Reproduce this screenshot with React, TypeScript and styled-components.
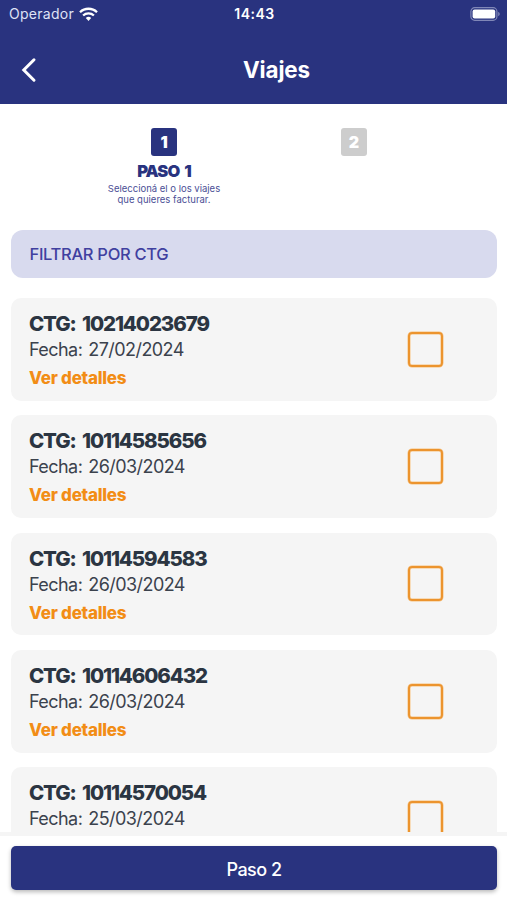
import React from 'react';
import styled, { createGlobalStyle } from 'styled-components';

const NAVY = '#29337f';
const ORANGE = '#f28d16';

const GlobalStyle = createGlobalStyle`
  * { box-sizing: border-box; }
  body { margin: 0; background: #fff; font-family: Inter, sans-serif; }
  button { font-family: inherit; }
`;

const Screen = styled.div`
  width: 507px;
  height: 900px;
  display: flex;
  flex-direction: column;
  overflow: hidden;
  background: #fff;
`;

const Header = styled.header`
  flex: none;
  height: 103.5px;
  background: ${NAVY};
  color: #fff;
`;

const StatusBar = styled.div`
  height: 28px;
  padding: 0 7px 0 9px;
  display: grid;
  grid-template-columns: 1fr auto 1fr;
  align-items: center;
`;

const Carrier = styled.div`
  display: flex;
  align-items: center;
  gap: 5px;
  font-size: 14px;
  letter-spacing: 0.28px;
  line-height: 28px;
  color: #dfe2f5;
`;

const Clock = styled.div`
  font-size: 14px;
  font-weight: 600;
  letter-spacing: 0.5px;
  line-height: 28px;
`;

const BatterySlot = styled.div`
  display: flex;
  justify-content: flex-end;
  padding-bottom: 1px;
`;

const NavBar = styled.div`
  height: 75px;
  padding: 5px 0 0 20px;
  display: grid;
  grid-template-columns: 40px 1fr;
  align-items: start;
`;

const BackButton = styled.button`
  width: 18px;
  height: 74px;
  padding: 0;
  border: 0;
  background: none;
  display: flex;
  align-items: center;
`;

const Title = styled.h1`
  margin: 0;
  padding-right: 14px;
  text-align: center;
  font-size: 22.4px;
  font-weight: 700;
  line-height: 74px;
  letter-spacing: -0.1px;
`;

const Steps = styled.div`
  flex: none;
  height: 126px;
  padding: 24px 58px 0 69px;
  display: grid;
  grid-template-columns: 1fr 1fr;
`;

const Step = styled.div`
  display: flex;
  flex-direction: column;
  align-items: center;
`;

const StepNumber = styled.div<{ $active?: boolean }>`
  width: 26px;
  height: 28px;
  border-radius: 3px;
  background: ${(p) => (p.$active ? NAVY : '#cdcdcd')};
  color: #fff;
  font-size: 16px;
  font-weight: 900;
  line-height: 29px;
  text-align: center;
`;

const StepTitle = styled.div`
  margin-top: 5px;
  color: ${NAVY};
  font-size: 16.5px;
  font-weight: 900;
  line-height: 20px;
  letter-spacing: -0.9px;
  word-spacing: 2.5px;
`;

const StepText = styled.div`
  margin-top: 2px;
  color: #4b4f96;
  font-size: 9.5px;
  line-height: 11px;
  letter-spacing: 0;
  text-align: center;
  white-space: nowrap;
`;

const Filter = styled.div`
  flex: none;
  height: 48.5px;
  margin: 0 10px 20px 11px;
  padding-left: 18.5px;
  border-radius: 12px;
  background: #d8daee;
  color: #4040a0;
  font-size: 16.5px;
  font-weight: 500;
  line-height: 48px;
  letter-spacing: -0.3px;
`;

const List = styled.main`
  flex: 1;
  min-height: 0;
  padding: 0 10px 0 11px;
  overflow: hidden;
`;

const Card = styled.article`
  height: 102.8px;
  margin-bottom: 14.5px;
  padding: 0 54px 0 18px;
  display: flex;
  align-items: center;
  justify-content: space-between;
  border-radius: 10px;
  background: #f5f5f5;
`;

const CardText = styled.div`
  height: 103px;
  padding-top: 13px;
  color: #2b3542;
  white-space: nowrap;
`;

const TripCode = styled.div`
  font-size: 20.5px;
  font-weight: 800;
  line-height: 26px;
  letter-spacing: -1.12px;
  word-spacing: 3px;
`;

const TripDate = styled.div`
  color: #3b424d;
  font-size: 18px;
  line-height: 25px;
  letter-spacing: -0.56px;
  word-spacing: 1.5px;
`;

const DetailsLink = styled.div`
  margin-top: 3px;
  color: ${ORANGE};
  font-size: 17px;
  font-weight: 800;
  line-height: 26px;
  letter-spacing: -0.25px;
`;

const Checkbox = styled.div`
  width: 35px;
  height: 35px;
  border: 2px solid #ec942e;
  border-radius: 4px;
  box-shadow: 0 0 0 0.5px #f8c27f, inset 0 0 0 0.5px #f8c27f;
`;

const Footer = styled.footer`
  flex: none;
  height: 68px;
  padding: 9.5px 10px 0 11px;
  border-top: 4px solid #f5f5f5;
  background: #fff;
`;

const NextButton = styled.button`
  display: block;
  width: 100%;
  height: 44.5px;
  padding: 0;
  border: 0;
  border-radius: 5px;
  background: ${NAVY};
  box-shadow: 0 2px 4px rgba(0, 0, 0, 0.28);
  color: #fff;
  font-size: 18px;
  font-weight: 500;
  line-height: 47px;
  letter-spacing: -0.5px;
`;

type Trip = { code: string; date: string; details: boolean };

const trips: Trip[] = [
  { code: '10214023679', date: '27/02/2024', details: true },
  { code: '10114585656', date: '26/03/2024', details: true },
  { code: '10114594583', date: '26/03/2024', details: true },
  { code: '10114606432', date: '26/03/2024', details: true },
  { code: '10114570054', date: '25/03/2024', details: false },
];

const WifiIcon = () => (
  <svg width="19" height="15" viewBox="0 0 19 15" fill="none" stroke="#fff" strokeWidth="2.3">
    <path d="M1 5.2a12.2 12.2 0 0 1 17 0" />
    <path d="M4.1 8.5a7.8 7.8 0 0 1 10.8 0" />
    <path d="M6.8 11.1a4 4 0 0 1 5.4 0L9.5 14Z" fill="#fff" stroke="none" />
  </svg>
);

const BatteryIcon = () => (
  <svg width="30" height="14" viewBox="0 0 30 14">
    <rect x="0.9" y="0.7" width="26" height="12.6" rx="3.8" fill="none" stroke="#8087b7" strokeWidth="1.2" />
    <rect x="2.6" y="2.4" width="22.6" height="9.2" rx="2" fill="#fff" />
    <path d="M28.2 5v4.2c2-.7 2-3.5 0-4.2Z" fill="#8087b7" />
  </svg>
);

const BackIcon = () => (
  <svg width="18" height="26" viewBox="0 0 18 26" fill="none" stroke="#fff" strokeWidth="3">
    <path d="M14 2.8 3.8 13 14 23.2" strokeLinecap="round" strokeLinejoin="miter" />
  </svg>
);

export default function App() {
  return (
    <Screen>
      <GlobalStyle />
      <Header>
        <StatusBar>
          <Carrier>
            Operador
            <WifiIcon />
          </Carrier>
          <Clock>14:43</Clock>
          <BatterySlot>
            <BatteryIcon />
          </BatterySlot>
        </StatusBar>
        <NavBar>
          <BackButton aria-label="Volver">
            <BackIcon />
          </BackButton>
          <Title>Viajes</Title>
        </NavBar>
      </Header>
      <Steps>
        <Step>
          <StepNumber $active>1</StepNumber>
          <StepTitle>PASO 1</StepTitle>
          <StepText>
            Seleccioná el o los viajes
            <br />
            que quieres facturar.
          </StepText>
        </Step>
        <Step>
          <StepNumber>2</StepNumber>
        </Step>
      </Steps>
      <Filter>FILTRAR POR CTG</Filter>
      <List>
        {trips.map((trip) => (
          <Card key={trip.code}>
            <CardText>
              <TripCode>CTG: {trip.code}</TripCode>
              <TripDate>Fecha: {trip.date}</TripDate>
              {trip.details && <DetailsLink>Ver detalles</DetailsLink>}
            </CardText>
            <Checkbox role="checkbox" aria-checked="false" />
          </Card>
        ))}
      </List>
      <Footer>
        <NextButton>Paso 2</NextButton>
      </Footer>
    </Screen>
  );
}
